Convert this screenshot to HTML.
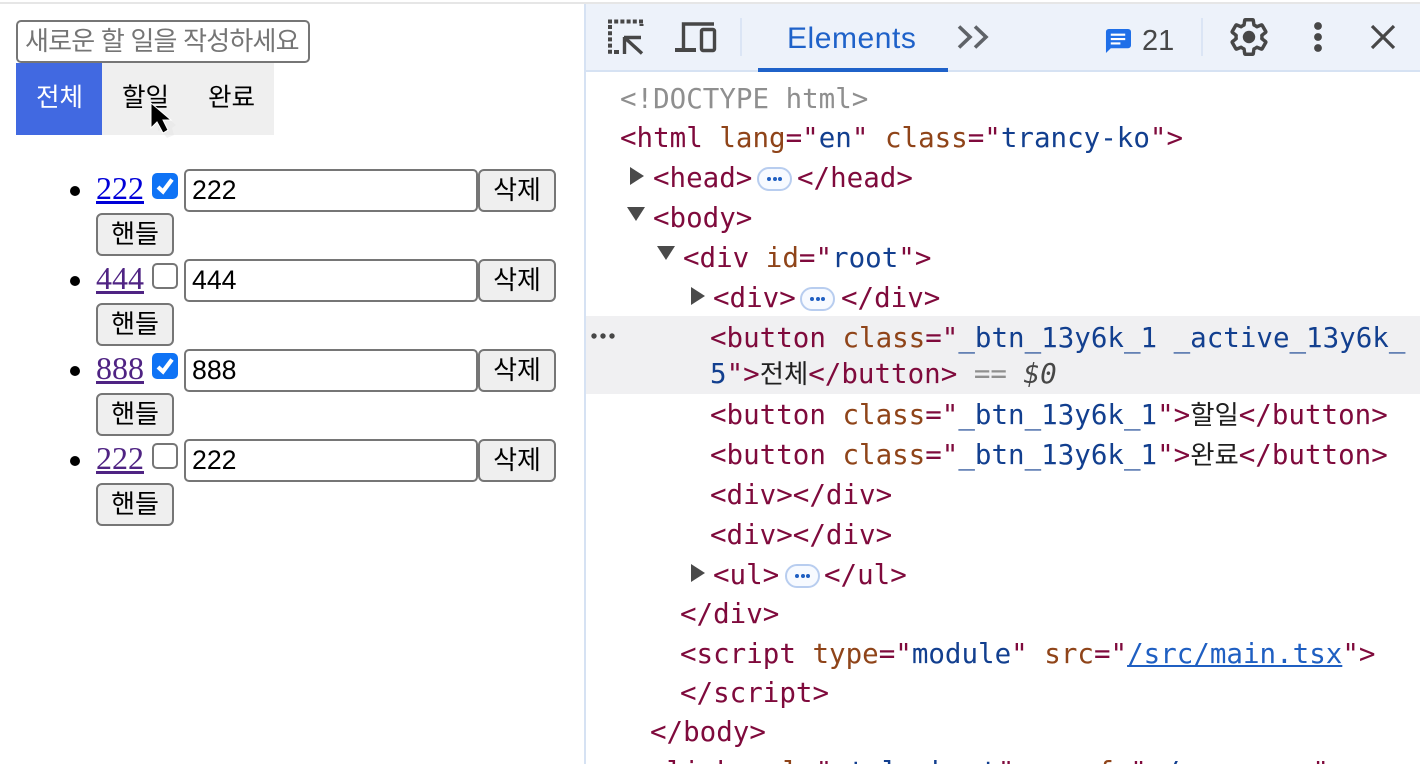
<!DOCTYPE html>
<html lang="ko"><head><meta charset="utf-8"><title>Todo</title>
<style>
html,body{margin:0;padding:0;background:#fff;width:1420px;height:764px;overflow:hidden;}
#w{width:1420px;height:764px;position:relative;overflow:hidden;font-family:"Liberation Sans","Noto Sans CJK KR",sans-serif;color:#000;}
.a{position:absolute;white-space:pre;}
.box{position:absolute;box-sizing:border-box;border:2px solid #767676;border-radius:5px;background:#fff;}
.btn{position:absolute;box-sizing:border-box;border:2px solid #767676;border-radius:6px;background:#efefef;font-size:26px;line-height:36px;text-align:center;font-family:"Noto Sans CJK KR",sans-serif;height:43px;}
.inp{height:43px;width:294px;left:184px;font-size:26.67px;line-height:39px;padding-left:6px;}
.chk{position:absolute;left:152px;width:26px;height:26px;box-sizing:border-box;border-radius:5px;border:2px solid #767676;background:#fff;}
.chk.on{background:#0f73f5;border:0;}
.lnk{position:absolute;left:96px;font-family:"Liberation Serif",serif;font-size:32px;line-height:40px;text-decoration:underline;text-decoration-thickness:3px;}
.dot{position:absolute;left:70px;width:10px;height:10px;border-radius:50%;background:#000;}
.tab{position:absolute;top:63px;height:72px;background:#efefef;font-family:"Noto Sans CJK KR",sans-serif;font-size:25.6px;line-height:66px;text-align:center;text-indent:1px;}
.l{position:absolute;white-space:pre;font-family:"DejaVu Sans Mono","Liberation Mono",monospace;font-size:27.5px;line-height:40px;height:40px;color:#7f0a3c;}
.n{color:#8f4419}.v{color:#123f8f}.g{color:#8f8f8f}.k{font-family:"Noto Sans CJK KR",sans-serif;font-size:26.4px;line-height:0;color:#202020;}
.tri{position:absolute;width:0;height:0;}
.tr{border-top:9px solid transparent;border-bottom:9px solid transparent;border-left:14px solid #4a4a4a;}
.td{border-left:9.5px solid transparent;border-right:9.5px solid transparent;border-top:14px solid #4a4a4a;}
.pill{position:absolute;width:35px;height:24px;box-sizing:border-box;border:2px solid #b8cdef;border-radius:12px;background:#f7faff;}
.pill i{position:absolute;top:8px;width:4.4px;height:4.4px;border-radius:50%;background:#1f5fc2;}
</style></head><body><div id="w">

<div class="a" style="left:0;top:2px;width:1420px;height:2px;background:#e6e6e6"></div>

<!-- left app -->
<div class="box" style="left:16px;top:20px;width:294px;height:43px;font-size:26px;line-height:35px;padding-left:7px;color:#757575;font-family:'Noto Sans CJK KR',sans-serif;white-space:pre;overflow:hidden;letter-spacing:-.8px">새로운 할 일을 작성하세요</div>
<div class="tab" style="left:16px;width:86px;background:#4169e1;color:#fff">전체</div>
<div class="tab" style="left:102px;width:86px">할일</div>
<div class="tab" style="left:188px;width:86px">완료</div>
<svg class="a" style="left:146px;top:100px" width="40" height="44" viewBox="0 0 40 44">
<path d="M12 10l18 15-4 3 2 7-7 3-6-8-3 1z" fill="#e4e4e4" opacity=".45"/>
<path d="M5 3v25l6-6 6 11 5-3-5-10h8z" fill="#000" stroke="#fff" stroke-width="1"/>
</svg>

<div class="dot" style="top:186px"></div>
<a class="lnk" style="top:168px;color:#0000d8">222</a>
<div class="chk on" style="top:173px"><svg width="26" height="26" viewBox="0 0 26 26"><path d="M6 14l5 4.5L20 6.5" fill="none" stroke="#fff" stroke-width="4.2"/></svg></div>
<div class="box inp" style="top:169px">222</div>
<div class="btn" style="left:478px;top:169px;width:78px">삭제</div>
<div class="btn" style="left:96px;top:213px;width:78px">핸들</div>

<div class="dot" style="top:276px"></div>
<a class="lnk" style="top:258px;color:#4f2383">444</a>
<div class="chk" style="top:263px"></div>
<div class="box inp" style="top:259px">444</div>
<div class="btn" style="left:478px;top:259px;width:78px">삭제</div>
<div class="btn" style="left:96px;top:303px;width:78px">핸들</div>

<div class="dot" style="top:366px"></div>
<a class="lnk" style="top:348px;color:#4f2383">888</a>
<div class="chk on" style="top:353px"><svg width="26" height="26" viewBox="0 0 26 26"><path d="M6 14l5 4.5L20 6.5" fill="none" stroke="#fff" stroke-width="4.2"/></svg></div>
<div class="box inp" style="top:349px">888</div>
<div class="btn" style="left:478px;top:349px;width:78px">삭제</div>
<div class="btn" style="left:96px;top:393px;width:78px">핸들</div>

<div class="dot" style="top:456px"></div>
<a class="lnk" style="top:438px;color:#4f2383">222</a>
<div class="chk" style="top:443px"></div>
<div class="box inp" style="top:439px">222</div>
<div class="btn" style="left:478px;top:439px;width:78px">삭제</div>
<div class="btn" style="left:96px;top:483px;width:78px">핸들</div>

<!-- devtools -->
<div class="a" style="left:584px;top:4px;width:2px;height:760px;background:#d6e2f3"></div>
<div class="a" style="left:586px;top:4px;width:834px;height:67px;background:#edf2fa"></div>
<div class="a" style="left:586px;top:70px;width:834px;height:2px;background:#d6e2f3"></div>
<div class="a" style="left:758px;top:68px;width:190px;height:4px;background:#1f62c9"></div>
<div class="a" style="left:740px;top:18px;width:2px;height:38px;background:#dbe5f5"></div>
<div class="a" style="left:1201px;top:18px;width:2px;height:38px;background:#dbe5f5"></div>

<svg class="a" style="left:606px;top:18px" width="40" height="38" viewBox="0 0 40 38" fill="none" stroke="#474747" stroke-width="4">
<path d="M2 3.5h36" stroke-dasharray="4 2.2"/><path d="M4 7v30" stroke-dasharray="4 2.2"/><path d="M35.5 6v2" /><path d="M8 34h5" />
<path d="M18 19.5h17M18.5 19v17M18.5 19.5l17.5 16" stroke-width="3.4"/></svg>
<svg class="a" style="left:674px;top:20px" width="44" height="34" viewBox="0 0 44 34" fill="none" stroke="#474747" stroke-width="3.4">
<path d="M40 4H9.5v25"/><path d="M1 30h21" stroke-width="4"/><rect x="27.5" y="9.5" width="13" height="21" rx="1.5"/></svg>

<div class="a" style="left:787px;top:19px;font-size:30px;letter-spacing:.55px;line-height:40px;color:#1f62c9">Elements</div>
<svg class="a" style="left:956px;top:24px" width="34" height="26" viewBox="0 0 34 26" fill="none" stroke="#5f6368" stroke-width="3.6"><path d="M3 2.5L14 13 3 23.5M19 2.5L30 13 19 23.5"/></svg>

<svg class="a" style="left:1105px;top:28px" width="26" height="26" viewBox="0 0 27 27"><path d="M4 1h20a3 3 0 0 1 3 3v14a3 3 0 0 1-3 3H6l-5 5V4a3 3 0 0 1 3-3z" fill="#1f6fe8"/><path d="M6 7h15M6 11.5h15M6 16h10" stroke="#fff" stroke-width="2.2"/></svg>
<div class="a" style="left:1142px;top:21px;font-size:29px;line-height:40px;color:#474747">21</div>

<svg class="a" style="left:1229.5px;top:18px" width="38" height="38" viewBox="1 1 22 22"><path fill="none" stroke="#474747" stroke-width="2" stroke-linejoin="round" d="M19.43 12.98c.04-.32.07-.64.07-.98s-.03-.66-.07-.98l2.11-1.65c.19-.15.24-.42.12-.64l-2-3.46c-.12-.22-.39-.3-.61-.22l-2.49 1c-.52-.4-1.08-.73-1.69-.98l-.38-2.65C14.46 2.18 14.25 2 14 2h-4c-.25 0-.46.18-.49.42l-.38 2.65c-.61.25-1.17.59-1.69.98l-2.49-1c-.23-.09-.49 0-.61.22l-2 3.46c-.13.22-.07.49.12.64l2.11 1.65c-.04.32-.07.65-.07.98s.03.66.07.98l-2.11 1.65c-.19.15-.24.42-.12.64l2 3.46c.12.22.39.3.61.22l2.49-1c.52.4 1.08.73 1.69.98l.38 2.65c.03.24.24.42.49.42h4c.25 0 .46-.18.49-.42l.38-2.65c.61-.25 1.17-.59 1.69-.98l2.49 1c.23.09.49 0 .61-.22l2-3.46c.12-.22.07-.49-.12-.64l-2.11-1.65z"/><circle cx="12" cy="12" r="3.6" fill="#474747"/></svg>
<svg class="a" style="left:1310px;top:20px" width="16" height="34" viewBox="0 0 16 34" fill="#474747"><circle cx="8" cy="6" r="3.9"/><circle cx="8" cy="17" r="3.9"/><circle cx="8" cy="28" r="3.9"/></svg>
<svg class="a" style="left:1370px;top:24px" width="26" height="26" viewBox="0 0 26 26" fill="none" stroke="#474747" stroke-width="3.2"><path d="M2 2l22 22M24 2L2 24"/></svg>

<!-- selection -->
<div class="a" style="left:586px;top:316px;width:834px;height:78px;background:#f0f0f2"></div>
<svg class="a" style="left:590px;top:331px" width="28" height="10" viewBox="0 0 28 10" fill="#474747"><circle cx="4" cy="5" r="2.7"/><circle cx="13" cy="5" r="2.7"/><circle cx="22" cy="5" r="2.7"/></svg>

<div class="l g" style="left:620px;top:79px">&lt;!DOCTYPE html&gt;</div>
<div class="l" style="left:620px;top:118px">&lt;html <span class="n">lang</span>="<span class="v">en</span>" <span class="n">class</span>="<span class="v">trancy-ko</span>"&gt;</div>
<div class="tri tr" style="left:630px;top:167px"></div>
<div class="l" style="left:653px;top:158px">&lt;head&gt;</div>
<div class="pill" style="left:757px;top:167px"><i style="left:8px"></i><i style="left:13.5px"></i><i style="left:19px"></i></div>
<div class="l" style="left:797px;top:158px">&lt;/head&gt;</div>
<div class="tri td" style="left:627px;top:207px"></div>
<div class="l" style="left:653px;top:198px">&lt;body&gt;</div>
<div class="tri td" style="left:657px;top:246px"></div>
<div class="l" style="left:683px;top:238px">&lt;div <span class="n">id</span>="<span class="v">root</span>"&gt;</div>
<div class="tri tr" style="left:691px;top:287px"></div>
<div class="l" style="left:713px;top:278px">&lt;div&gt;</div>
<div class="pill" style="left:800px;top:287px"><i style="left:8px"></i><i style="left:13.5px"></i><i style="left:19px"></i></div>
<div class="l" style="left:841px;top:278px">&lt;/div&gt;</div>
<div class="l" style="left:710px;top:318px">&lt;button <span class="n">class</span>="<span class="v">_btn_13y6k_1 _active_13y6k_</span></div>
<div class="l" style="left:710px;top:354px"><span class="v">5</span>"&gt;<span class="k">전체</span>&lt;/button&gt; <span class="g">==</span> <i style="color:#474747">$0</i></div>
<div class="l" style="left:710px;top:395px">&lt;button <span class="n">class</span>="<span class="v">_btn_13y6k_1</span>"&gt;<span class="k">할일</span>&lt;/button&gt;</div>
<div class="l" style="left:710px;top:435px">&lt;button <span class="n">class</span>="<span class="v">_btn_13y6k_1</span>"&gt;<span class="k">완료</span>&lt;/button&gt;</div>
<div class="l" style="left:710px;top:475px">&lt;div&gt;&lt;/div&gt;</div>
<div class="l" style="left:710px;top:515px">&lt;div&gt;&lt;/div&gt;</div>
<div class="tri tr" style="left:691px;top:564px"></div>
<div class="l" style="left:713px;top:555px">&lt;ul&gt;</div>
<div class="pill" style="left:785px;top:564px"><i style="left:8px"></i><i style="left:13.5px"></i><i style="left:19px"></i></div>
<div class="l" style="left:824px;top:555px">&lt;/ul&gt;</div>
<div class="l" style="left:680px;top:594px">&lt;/div&gt;</div>
<div class="l" style="left:680px;top:634px">&lt;script <span class="n">type</span>="<span class="v">module</span>" <span class="n">src</span>="<span style="color:#1f5fc2;text-decoration:underline">/src/main.tsx</span>"&gt;</div>
<div class="l" style="left:680px;top:673px">&lt;/script&gt;</div>
<div class="l" style="left:650px;top:712px">&lt;/body&gt;</div>
<div class="l" style="left:650px;top:752px">&lt;link <span class="n">rel</span>="<span class="v">stylesheet</span>" <span class="n">scrof</span>="<span class="v">./rooms.cs</span>"</div>
</div></body></html>
